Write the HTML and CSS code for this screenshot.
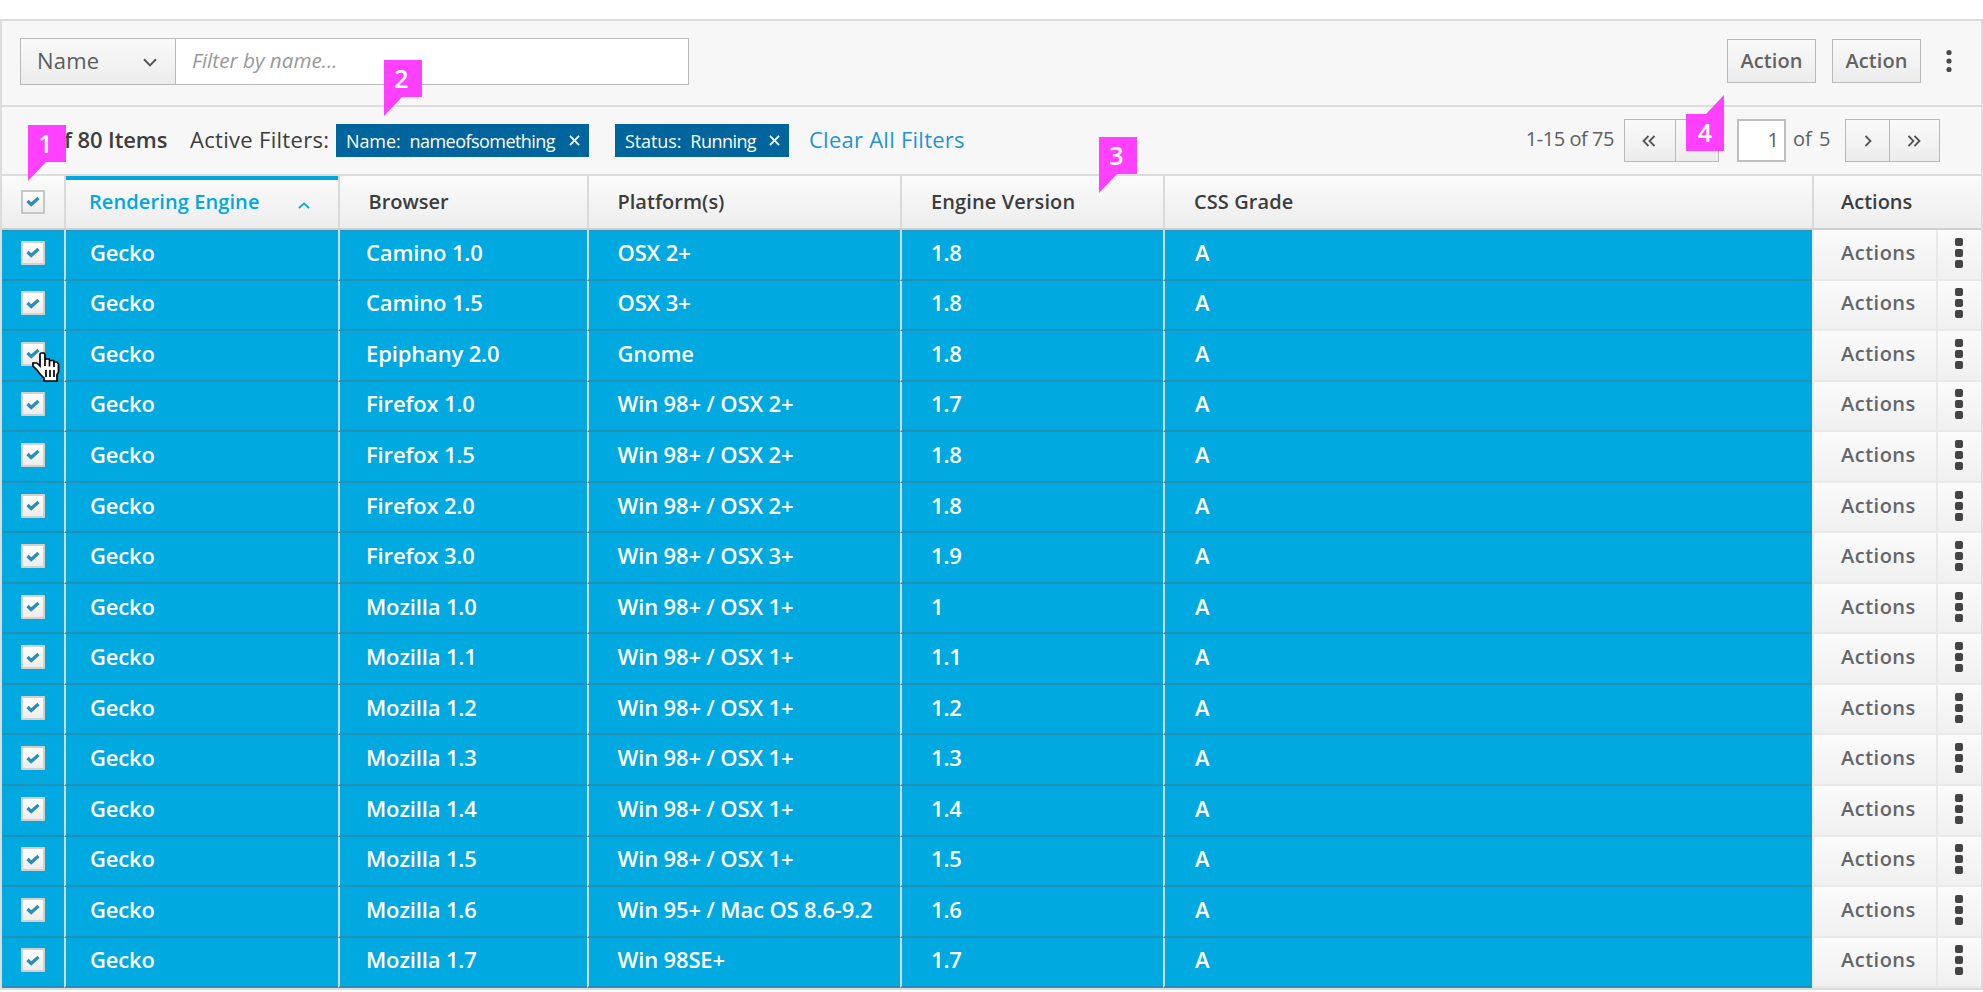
FILE: index.html
```html
<!DOCTYPE html>
<html lang="en">
<head>
<meta charset="utf-8">
<title>Table View</title>
<link rel="stylesheet" href="styles.css">
</head>
<body>
<main class="panel">
  <section class="toolbar">
    <div class="filter">
      <div class="filter-type"><span>Name</span>
        <svg width="14" height="9" viewBox="0 0 14 9"><path d="M1 1.2 7 7.4 13 1.2"/></svg>
      </div>
      <div class="filter-input"><span>Filter by name...</span></div>
    </div>
    <div class="toolbar-actions">
      <button class="btn">Action</button>
      <button class="btn">Action</button>
      <svg class="kebab" width="6" height="24" viewBox="0 0 6 24"><circle cx="3" cy="3.5" r="2.6"/><circle cx="3" cy="12" r="2.6"/><circle cx="3" cy="20.5" r="2.6"/></svg>
    </div>
  </section>

  <section class="results">
    <span class="count">f 80 Items</span>
    <span class="active-label">Active Filters:</span>
    <span class="chip chip-name"><span class="chip-key">Name:</span><span class="chip-value">nameofsomething</span><svg width="11" height="11" viewBox="0 0 12 12"><path d="M1 1 11 11M11 1 1 11"/></svg></span>
    <span class="chip chip-status"><span class="chip-key">Status:</span><span class="chip-value">Running</span><svg width="11" height="11" viewBox="0 0 12 12"><path d="M1 1 11 11M11 1 1 11"/></svg></span>
    <a class="clear">Clear All Filters</a>
    <div class="pager">
      <span class="range">1-15 of 75</span>
      <div class="pager-group">
        <span class="pager-btn wide"><svg width="14" height="12" viewBox="0 0 14 12"><path d="M6.5 1 1.5 6l5 5M12.500 1l-5 5 5 5"/></svg></span>
        <span class="pager-btn"><svg width="8" height="12" viewBox="0 0 8 12"><path d="M6.500 1l-5 5 5 5"/></svg></span>
      </div>
      <span class="page-input">1</span>
      <span class="page-total">of&nbsp;5</span>
      <div class="pager-group">
        <span class="pager-btn"><svg width="8" height="12" viewBox="0 0 8 12"><path d="M1.500 1l5 5-5 5"/></svg></span>
        <span class="pager-btn wide"><svg width="14" height="12" viewBox="0 0 14 12"><path d="M1.500 1l5 5-5 5M7.500 1l5 5-5 5"/></svg></span>
      </div>
    </div>
  </section>

  <div class="grid head">
    <div class="cell check"><span class="box"><svg width="14" height="11" viewBox="0 0 14 11"><path d="M1.500 5 5.200 8.500 12.500 2"/></svg></span></div>
    <div class="cell sorted"><span>Rendering Engine</span><svg width="12" height="7" viewBox="0 0 12 7"><path d="M1 6 6 1.400 11 6"/></svg></div>
    <div class="cell">Browser</div>
    <div class="cell">Platform(s)</div>
    <div class="cell">Engine Version</div>
    <div class="cell">CSS Grade</div>
    <div class="cell h-actions">Actions</div>
  </div>
  <div class="rows" id="rows"></div>
</main>

<div class="pin pin-1"><span>1</span></div>
<div class="pin pin-2"><span>2</span></div>
<div class="pin pin-3"><span>3</span></div>
<div class="pin pin-4"><span>4</span></div>
<svg class="cursor" width="28" height="31" viewBox="0 0 28 31">
  <path d="M9 1h3l1 1.500V7h4l.8 1.500h3.700L22 10h3l1.500 2v8L25 23v6H12v-3l-4-4-3-4-4-4v-3h4l3 3V2z"/>
  <path class="lines" d="M13 7v7M17.500 8.500v6M22 10v5M14 18v7M18 18v7M22 18v7"/>
</svg>
<script src="rows.js"></script>
</body>
</html>
```
FILE: rows.js
```js
const data = [
  ["Camino 1.0", "OSX 2+", "1.8"],
  ["Camino 1.5", "OSX 3+", "1.8"],
  ["Epiphany 2.0", "Gnome", "1.8"],
  ["Firefox 1.0", "Win 98+ / OSX 2+", "1.7"],
  ["Firefox 1.5", "Win 98+ / OSX 2+", "1.8"],
  ["Firefox 2.0", "Win 98+ / OSX 2+", "1.8"],
  ["Firefox 3.0", "Win 98+ / OSX 3+", "1.9"],
  ["Mozilla 1.0", "Win 98+ / OSX 1+", "1"],
  ["Mozilla 1.1", "Win 98+ / OSX 1+", "1.1"],
  ["Mozilla 1.2", "Win 98+ / OSX 1+", "1.2"],
  ["Mozilla 1.3", "Win 98+ / OSX 1+", "1.3"],
  ["Mozilla 1.4", "Win 98+ / OSX 1+", "1.4"],
  ["Mozilla 1.5", "Win 98+ / OSX 1+", "1.5"],
  ["Mozilla 1.6", "Win 95+ / Mac OS 8.6-9.2", "1.6"],
  ["Mozilla 1.7", "Win 98SE+", "1.7"]
];
const check = '<span class="box"><svg width="14" height="11" viewBox="0 0 14 11"><path d="M1.500 5 5.200 8.500 12.500 2"/></svg></span>';
const kebab = '<svg class="dots" width="8" height="30" viewBox="0 0 8 30"><rect width="8" height="8" rx="2"/><rect y="11" width="8" height="8" rx="2"/><rect y="22" width="8" height="8" rx="2"/></svg>';
document.getElementById("rows").innerHTML = data.map(([browser, platform, version]) =>
  `<div class="grid row"><div class="cell check">${check}</div><div class="cell">Gecko</div><div class="cell">${browser}</div><div class="cell">${platform}</div><div class="cell">${version}</div><div class="cell">A</div><div class="cell action">Actions</div><div class="cell more">${kebab}</div></div>`
).join("");
```
FILE: styles.css
```css
* { box-sizing: border-box; }
body { margin: 0; background: #fff; overflow: hidden; font: 22px/1 "Open Sans", sans-serif; color: #3d3d3d; white-space: nowrap; }
svg { display: block; fill: none; stroke: #555; stroke-width: 1.8; flex: none; }
.panel { margin-top: 19px; width: 1983px; height: 971px; border: 2px solid #dcdcdc; background: #f7f7f7; }

.toolbar { height: 86px; border-bottom: 2px solid #dcdcdc; display: flex; justify-content: space-between; padding: 17px 29px 0 18px; }
.filter { display: flex; width: 669px; height: 47px; border: 1.500px solid #b9b9b9; background: #fff; }
.filter-type { width: 155px; display: flex; align-items: center; justify-content: space-between; padding: 0 18px 3px 16px; border-right: 1px solid #b9b9b9; background: linear-gradient(#fafafa, #ececec); color: #5c5c5c; letter-spacing: 0.2px; }
.filter-type svg { margin-top: 5px; stroke-width: 2; }
.filter-input { display: flex; align-items: center; padding: 0 0 2px 16px; font-size: 20.700px; font-style: italic; color: #999; }
.toolbar-actions { display: flex; gap: 16px; padding-top: 1px; }
.btn { width: 89px; height: 44px; padding: 0 0 1px; border: 1.500px solid #b9b9b9; background: linear-gradient(#fafafa, #ececec); font: 600 20px/1 "Open Sans", sans-serif; color: #636363; letter-spacing: 0.1px; }
.kebab { margin: 10px 0 0 9px; fill: #4a4a4a; stroke: none; }

.results { height: 69px; border-bottom: 2px solid #dcdcdc; display: flex; align-items: center; padding: 0 41px 0 62px; }
.count { width: 126px; padding-bottom: 3px; font-weight: 600; letter-spacing: -0.1px; }
.active-label { width: 146px; padding-bottom: 3px; letter-spacing: 0.300px; }
.chip { height: 33px; display: flex; align-items: center; background: #00659c; color: #fff; font-size: 18px; padding: 0 9px 0 10px; }
.chip svg { margin-left: auto; stroke: #fff; stroke-width: 2; }
.chip-name { width: 253px; margin-right: 26px; }
.chip-status { width: 174px; margin-right: 20px; }
.chip-key { margin-right: 9px; letter-spacing: -0.1px; }
.chip-value { letter-spacing: -0.550px; }
.clear { padding-bottom: 3px; color: #1f94d2; letter-spacing: 0.250px; }
.pager { margin-left: auto; display: flex; align-items: center; font-size: 20px; color: #606060; }
.range { margin-right: 10px; padding-bottom: 3px; letter-spacing: -0.450px; }
.pager-group { display: flex; height: 43px; border: 1.500px solid #b9b9b9; background: linear-gradient(#fafafa, #ececec); }
.pager-btn { width: 43px; display: flex; align-items: center; justify-content: center; }
.pager-btn.wide { width: 50px; padding-right: 2px; }
.pager-btn + .pager-btn { border-left: 1px solid #b9b9b9; }
.page-input { width: 49px; height: 43px; margin: 0 7px 0 18px; border: 2px solid #bebebe; background: #fff; line-height: 37px; text-align: right; padding-right: 5px; }
.page-total { width: 52px; padding-bottom: 3px; word-spacing: 2px; }

.grid { display: grid; grid-template-columns: 62px 274px 249px 313px 263px 649px 124px 1fr; }
.cell { display: flex; align-items: center; }
.head { height: 54px; background: linear-gradient(#fbfbfb, #ededed); border-bottom: 2px solid #cfcfcf; font-weight: 600; font-size: 20px; }
.head .cell { padding: 0 0 0 28.500px; border-left: 2px solid #dadada; }
.head .cell:nth-child(5), .head .cell:nth-child(6) { padding-left: 29px; letter-spacing: 0.1px; }
.head .cell.check { padding: 0 0 1px 19px; border-left: 0; }
.head .sorted { color: #00a8dd; justify-content: space-between; padding-right: 28px; box-shadow: inset 0 4px #00a8dd; padding-left: 23px; letter-spacing: 0.1px; }
.sorted svg { stroke: #00a8dd; margin-top: 6px; }
.head .h-actions { grid-column: span 2; padding-left: 27px; }
.box { width: 24px; height: 24px; border: 2px solid #c6c6c6; border-radius: 1px; background: linear-gradient(#fff, #ededed); display: flex; align-items: center; justify-content: center; }
.box svg { stroke: #2b8eb8; stroke-width: 3.200; }

.row { height: 50.550px; font-weight: 600; }
.row .cell { background: #00a9df; color: #fff; border-left: 2px solid #d0dade; border-bottom: 2px solid #2291b8; padding: 0 0 5px 28.500px; letter-spacing: -0.150px; }
.row:first-child .cell:nth-child(-n+6) { box-shadow: inset 0 1px #2291b8; }
.row .check { border-left: 0; padding: 0 0 3px 19px; }
.row .cell:nth-child(2) { padding-left: 24px; }
.row .cell:nth-child(3) { padding-left: 26px; }
.row .cell:nth-child(5) { padding-left: 29px; }
.row .cell:nth-child(6) { padding-left: 30px; }
.row .box { border-color: #d4d0cd; }
.row .action, .row .more { background: linear-gradient(#fbfbfb, #f0f0f0); border-color: #e9e9e9; color: #63666c; font-size: 20px; }
.row .action { padding: 0 0 3px 27px; letter-spacing: 0.5px; }
.row .more { padding: 0 0 3px 17px; }
.dots { fill: #444; stroke: none; }

.pin { position: absolute; width: 38px; height: 56px; padding-right: 3px; background: #ff40ff; color: #fff; font-size: 25px; font-weight: 600; text-align: center; line-height: 36px; clip-path: polygon(0 0, 100% 0, 100% 37px, 18px 37px, 0 100%); }
.pin-1 { left: 28px; top: 125px; }
.pin-2 { left: 384px; top: 60px; }
.pin-3 { left: 1099px; top: 137px; }
.pin-4 { left: 1686px; top: 95px; padding-right: 0; padding-top: 19px; clip-path: polygon(0 19px, 20px 19px, 100% 0, 100% 100%, 0 100%); }
.cursor { position: absolute; left: 32px; top: 352px; fill: #fff; stroke: #000; stroke-width: 1.700; }
.cursor .lines { fill: none; }
```
